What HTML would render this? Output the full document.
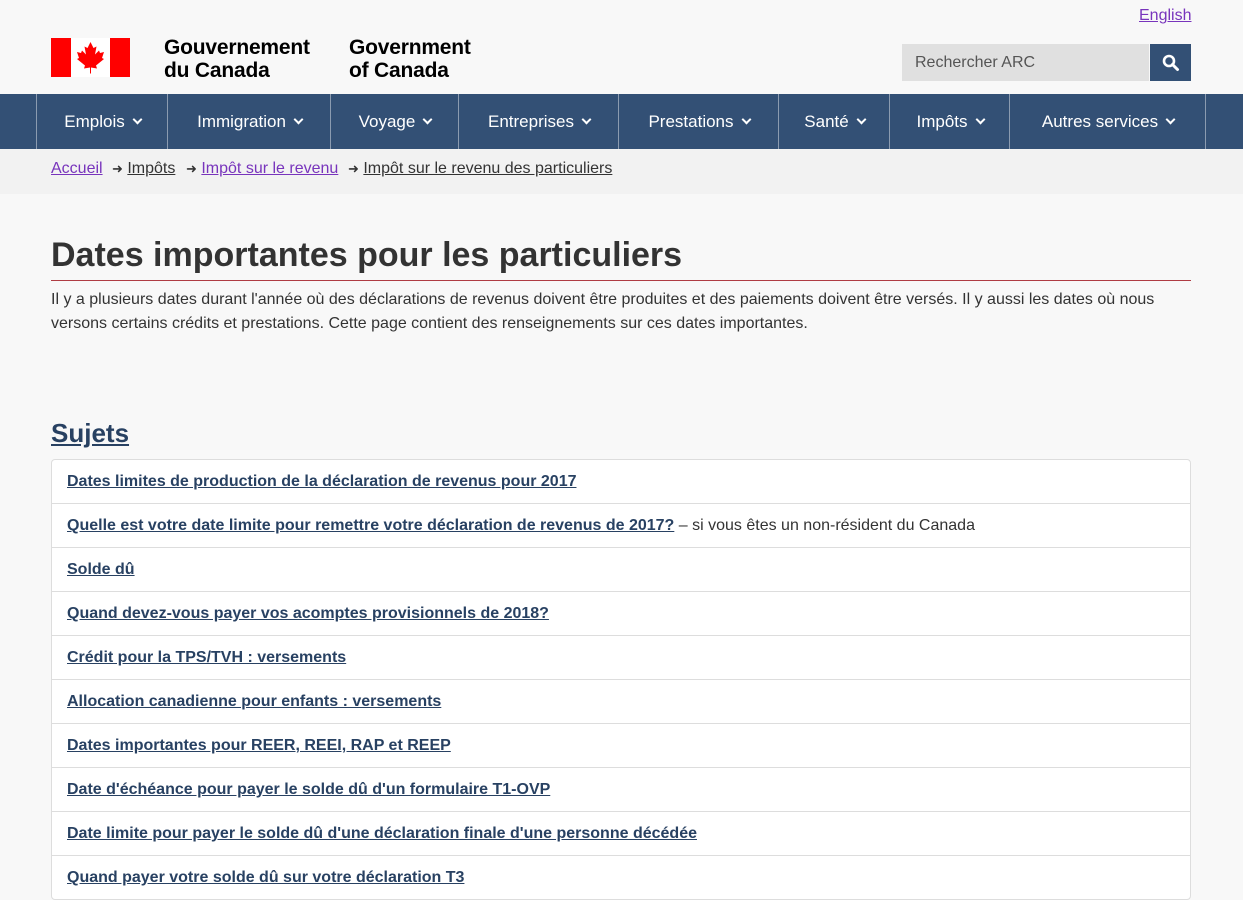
<!DOCTYPE html>
<html><head><meta charset="utf-8"><style>
body{margin:0;background:#f8f8f8;font-family:"Liberation Sans",sans-serif;color:#333;width:1243px;height:885px;overflow:hidden;position:relative}
a{color:#284162;text-decoration:underline}
.abs{position:absolute}
.flag{left:51px;top:38px;width:79px;height:39px;background:#fff}
.nav{left:0;top:94px;width:1243px;height:55px;background:#335075}
.nav div{position:absolute;top:0;height:55px;border-left:1px solid #8b9bb0;color:#fff;font-size:17px;line-height:55px;text-align:center}
.nav div:after{content:"";display:inline-block;width:5px;height:5px;border-right:2.5px solid #fff;border-bottom:2.5px solid #fff;transform:rotate(45deg);margin-left:9px;position:relative;top:-4px}
.nav .e:after{display:none}
.bc{left:0;top:149px;width:1243px;height:45px;background:#f2f2f2}
.bc span{position:absolute;top:10px;font-size:16px;line-height:20px;height:20px}
.list{left:51px;top:459px;width:1138px;border:1px solid #ddd;border-radius:4px;background:#fff}
.list div{height:43px;border-top:1px solid #ddd;padding-left:15px;line-height:43px;font-size:16px}
.list div:first-child{border-top:0}
.list a{font-weight:bold;color:#284162}
</style></head><body>
<a class="abs" style="left:1139px;top:7px;font-size:16px;color:#7834bc">English</a>
<div class="abs flag"><div class="abs" style="left:0;top:0;width:20px;height:39px;background:#f00"></div><div class="abs" style="right:0;top:0;width:20px;height:39px;background:#f00"></div>
<svg class="abs" style="left:25px;top:4px" width="29" height="32" viewBox="0 0 29 32"><path fill="#f00" d="M14.5 0l-3 6-3-1.5 1.5 8-4-4-1 2.5-4-1 2 6-2 1 8 6.5-1 3 6-1v6h1v-6l6 1-1-3 8-6.5-2-1 2-6-4 1-1-2.5-4 4 1.5-8-3 1.5z"/></svg></div>
<div class="abs" style="left:164px;top:36px;font-size:21px;line-height:23px;color:#000;font-weight:bold;letter-spacing:-0.2px">Gouvernement<br>du Canada</div>
<div class="abs" style="left:349px;top:36px;font-size:21px;line-height:23px;color:#000;font-weight:bold;letter-spacing:-0.2px">Government<br>of Canada</div>
<div class="abs" style="left:902px;top:44px;width:247px;height:37px;background:#e0e0e0;color:#555;font-size:16px;line-height:37px;text-indent:13px">Rechercher ARC</div>
<div class="abs" style="left:1150px;top:44px;width:41px;height:37px;background:#335075"><svg style="margin:10px 0 0 12px" width="18" height="18" viewBox="0 0 18 18"><circle cx="7" cy="7" r="5" fill="none" stroke="#fff" stroke-width="2.6"/><path d="M10.5 10.5l5 5" stroke="#fff" stroke-width="3" stroke-linecap="round"/></svg></div>
<div class="abs nav">
<div style="left:36px;width:131px">Emplois</div>
<div style="left:167px;width:163px">Immigration</div>
<div style="left:330px;width:128px">Voyage</div>
<div style="left:458px;width:160px">Entreprises</div>
<div style="left:618px;width:160px">Prestations</div>
<div style="left:778px;width:111px">Santé</div>
<div style="left:889px;width:120px">Impôts</div>
<div style="left:1009px;width:196px">Autres services</div>
<div style="left:1205px;width:38px" class="e"></div>
</div>
<div class="abs bc">
<span style="left:51px"><a style="color:#7834bc">Accueil</a></span>
<span style="left:112px"><span style="position:static;font-size:13px">➜</span> <a style="color:#333">Impôts</a></span>
<span style="left:186px"><span style="position:static;font-size:13px">➜</span> <a style="color:#7834bc">Impôt sur le revenu</a></span>
<span style="left:348px"><span style="position:static;font-size:13px">➜</span> <a style="color:#333">Impôt sur le revenu des particuliers</a></span>
</div>
<h1 class="abs" style="left:51px;top:236px;margin:0;font-size:34px;width:1140px;border-bottom:1px solid #af3c43;padding-bottom:6px;line-height:38px">Dates importantes pour les particuliers</h1>
<p class="abs" style="left:51px;top:288px;margin:0;width:1140px;font-size:16px;line-height:24px">Il y a plusieurs dates durant l'année où des déclarations de revenus doivent être produites et des paiements doivent être versés. Il y aussi les dates où nous versons certains crédits et prestations. Cette page contient des renseignements sur ces dates importantes.</p>
<h2 class="abs" style="left:51px;top:418px;margin:0;font-size:26px"><a>Sujets</a></h2>
<div class="abs list">
<div><a>Dates limites de production de la déclaration de revenus pour 2017</a></div>
<div><a>Quelle est votre date limite pour remettre votre déclaration de revenus de 2017?</a> – si vous êtes un non-résident du Canada</div>
<div><a>Solde dû</a></div>
<div><a>Quand devez-vous payer vos acomptes provisionnels de 2018?</a></div>
<div><a>Crédit pour la TPS/TVH : versements</a></div>
<div><a>Allocation canadienne pour enfants : versements</a></div>
<div><a>Dates importantes pour REER, REEI, RAP et REEP</a></div>
<div><a>Date d'échéance pour payer le solde dû d'un formulaire T1-OVP</a></div>
<div><a>Date limite pour payer le solde dû d'une déclaration finale d'une personne décédée</a></div>
<div><a>Quand payer votre solde dû sur votre déclaration T3</a></div>
</div>
</body></html>
